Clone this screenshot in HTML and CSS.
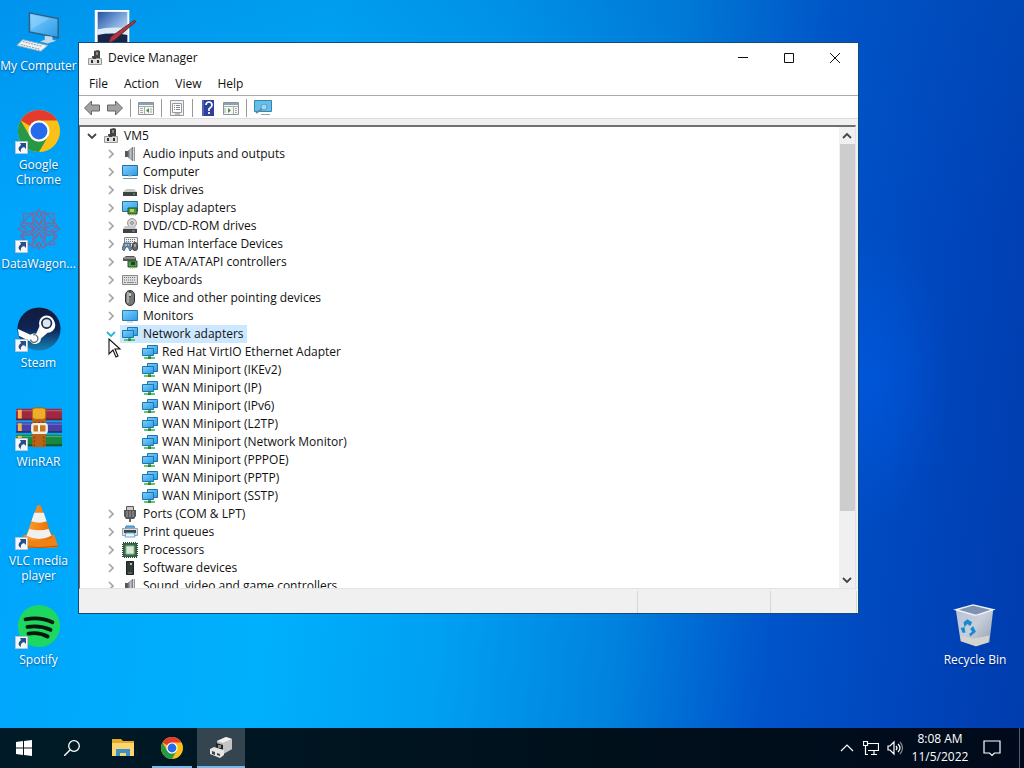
FILE: index.html
```html
<!DOCTYPE html>
<html lang="en">
<head>
<meta charset="utf-8">
<title>Device Manager</title>
<link rel="stylesheet" href="styles.css">
</head>
<body>
<svg class="defs" aria-hidden="true">
  <defs>
    <linearGradient id="screen" x1="0" y1="0" x2="1" y2="1"><stop offset="0" stop-color="#7fd0ff"/><stop offset="1" stop-color="#2c9be6"/></linearGradient>
    <linearGradient id="steel" x1="0" y1="0" x2="1" y2="0"><stop offset="0" stop-color="#666"/><stop offset=".5" stop-color="#c4c4c4"/><stop offset="1" stop-color="#777"/></linearGradient>
    <linearGradient id="steam" x1="0" y1="0" x2="0" y2="1"><stop offset="0" stop-color="#121a3a"/><stop offset=".5" stop-color="#0f2556"/><stop offset="1" stop-color="#1583b8"/></linearGradient>
    <linearGradient id="cone" x1="0" y1="0" x2="1" y2="0"><stop offset="0" stop-color="#ffa130"/><stop offset="1" stop-color="#e86a00"/></linearGradient>
    <linearGradient id="bin" x1="0" y1="0" x2="1" y2="1"><stop offset="0" stop-color="#b3c3d8"/><stop offset=".5" stop-color="#c8ced9"/><stop offset="1" stop-color="#8f9db4"/></linearGradient>
    <linearGradient id="sky" x1="0" y1="0" x2="1" y2="1"><stop offset="0" stop-color="#2550a0"/><stop offset=".5" stop-color="#7ba6dc"/><stop offset="1" stop-color="#e6eef6"/></linearGradient>
  </defs>
  <symbol id="right" viewBox="0 0 12 12"><path d="M4 2l4 4-4 4" fill="none" stroke="#a4a4a4" stroke-width="1.7"/></symbol>
  <symbol id="down" viewBox="0 0 12 12"><path d="M2 4l4 4 4-4" fill="none" stroke="currentColor" stroke-width="1.8"/></symbol>
  <symbol id="device" viewBox="0 0 16 16"><path d="M7 1l4-1 2 1v8H7z" fill="#444"/><path d="M9 2h2v3H9z" fill="#8a8a8a"/><path d="M5 6h4v4H5z" fill="#555"/><path d="M1.500 8.500h13v6h-13z" fill="#dededa" stroke="#999"/><path d="M4 10h2v3H4zM10 10h2v3h-2z" fill="#333"/><path d="M6 6h3v3H6z" fill="#444"/></symbol>
  <symbol id="audio" viewBox="0 0 16 16"><path d="M3 5h3v6H3z" fill="#555"/><path d="M6 5l5-4v14l-5-4z" fill="url(#steel)" stroke="#777" stroke-width=".6"/><path d="M12.500 1v14" stroke="#999"/></symbol>
  <symbol id="computer" viewBox="0 0 16 16"><path d="M.5 1.500h15v10H.5z" fill="url(#screen)" stroke="#23739f"/><path d="M1 14.500h14" stroke="#6c9fbd"/><path d="M6 12h4" stroke="#bbb"/></symbol>
  <symbol id="monitor" viewBox="0 0 16 16"><path d="M.5 2.500h15v10H.5z" fill="url(#screen)" stroke="#267cb0"/><path d="M5 14h6" stroke="#bbb"/></symbol>
  <symbol id="disk" viewBox="0 0 16 16"><path d="M4 7h8l3 3H1z" fill="#c6c9c8"/><path d="M1 10h14v4H1z" fill="#3c4444"/><path d="M11 12h2" stroke="#38d270"/></symbol>
  <symbol id="display" viewBox="0 0 16 16"><path d="M.5 1.500h15v10H.5z" fill="url(#screen)" stroke="#23739f"/><path d="M6 8h9v6H6z" fill="#439849" stroke="#24532b"/><path d="M8 9h4v3H8z" fill="#bacb47"/><path d="M7 15h7" stroke="#d8a931" stroke-dasharray="1 1"/></symbol>
  <symbol id="dvd" viewBox="0 0 16 16"><circle cx="10" cy="5" r="4.500" fill="#d5d5d5" stroke="#999"/><circle cx="10" cy="5" r="1.300" fill="#fff" stroke="#777"/><path d="M3 8h9l3 3H1z" fill="#c6c9c8"/><path d="M1 11h14v4H1z" fill="#3c4444"/><path d="M10 13h3" stroke="#999"/></symbol>
  <symbol id="hid" viewBox="0 0 16 16"><path d="M2.500 1.500h13v6h-13z" fill="#eee" stroke="#888"/><path d="M4 3.500h10M4 5.500h10" stroke="#777" stroke-dasharray="1 1"/><path d="M0 13l2-6h6l2 6-2 2-2-4H4l-2 4z" fill="#6289ab" stroke="#344b5b" stroke-width=".7"/><path d="M3 9h2M6 9h1" stroke="#dcecf8"/><rect x="10.500" y="6.500" width="5" height="8" rx="2.500" fill="#666" stroke="#444"/><path d="M13 8v3" stroke="#ddd"/></symbol>
  <symbol id="ide" viewBox="0 0 16 16"><path d="M1 4l3-2h8l2 2v3H1z" fill="#555"/><path d="M2 4h11" stroke="#c7c7c7"/><path d="M6 7h9v6H6z" fill="#48a04e" stroke="#285a2c"/><path d="M9 8h4v3H9z" fill="#243e29"/><path d="M8 14h6" stroke="#c9a639" stroke-dasharray="1 1"/></symbol>
  <symbol id="keyboard" viewBox="0 0 16 16"><path d="M.5 3.500h15v9H.5z" fill="#ddd" stroke="#888"/><path d="M2 5.500h12M2 8h12" stroke="#777" stroke-dasharray="1 1"/><path d="M2 10.500h2M5 10.500h7M13 10.500h1" stroke="#888"/></symbol>
  <symbol id="mouse" viewBox="0 0 16 16"><rect x="3.500" y=".5" width="9" height="15" rx="4.500" fill="#777" stroke="#333"/><rect x="5" y="2" width="2" height="11" rx="1" fill="#aaa"/><path d="M8 1v6" stroke="#222"/><path d="M8 3v3" stroke="#eee" stroke-width="1.500"/></symbol>
  <symbol id="network" viewBox="0 0 16 16"><path d="M5.500 1.500h10v8h-10z" fill="url(#screen)" stroke="#1d77a9"/><path d="M.5 4.500h11v7H.5z" fill="url(#screen)" stroke="#1d77a9"/><path d="M6 12h3v2H6z" fill="#54a963"/><path d="M2 14h11" stroke="#5cc873" stroke-width="2"/><path d="M6 14h3" stroke="#2c8143" stroke-width="2"/></symbol>
  <symbol id="port" viewBox="0 0 16 16"><path d="M4.500.5h7v4h-7z" fill="#ccc" stroke="#555"/><path d="M2 4h12v6l-2 3H4l-2-3z" fill="#555"/><path d="M5 5v6M8 5v6M11 5v6" stroke="#aaa"/><path d="M7 13h2v3H7z" fill="#666"/></symbol>
  <symbol id="printer" viewBox="0 0 16 16"><path d="M4 2h8l1 4H3z" fill="#52adea" stroke="#55839e"/><path d="M.5 4.500h15v7H.5z" fill="#dce1e3" stroke="#9aa5ab"/><path d="M2 6h12v3H2z" fill="#38474f"/><path d="M4 9h8l1 4H3z" fill="#e8f7ff" stroke="#6aa8cb"/></symbol>
  <symbol id="processor" viewBox="0 0 16 16"><path d="M1 1h14v14H1z" fill="#356842" stroke="#234b30" stroke-width="2" stroke-dasharray="1 1"/><path d="M1.500 1.500h13v13h-13z" fill="#3a6b46"/><path d="M4 4h8v8H4z" fill="#d7e9d9" stroke="#8fb697"/></symbol>
  <symbol id="software" viewBox="0 0 16 16"><path d="M4.500 1.500h7v13h-7z" fill="#303c38" stroke="#17201d"/><path d="M8 3h2v2H8z" fill="#a7c7b3"/><path d="M6 13h4" stroke="#78827b"/></symbol>
  <symbol id="chrome" viewBox="0 0 48 48"><circle cx="24" cy="24" r="22" fill="#fbc116"/><path d="M4.950 13A22 22 0 0 1 43.050 13H24A11 11 0 0 0 14.470 18.500z" fill="#e33b2e"/><path d="M4.950 13A22 22 0 0 0 24 46L33.530 29.500A11 11 0 0 1 14.470 29.500z" fill="#269947"/><circle cx="24" cy="24" r="11" fill="#fff"/><circle cx="24" cy="24" r="8.800" fill="#276bed"/></symbol>
  <symbol id="shortcut" viewBox="0 0 13 13"><path d="M.5.5h12v12H.5z" fill="#f5f7fa" stroke="#b8c4d4"/><path d="M5 2h6v6L9 6Q5 7 6 11Q1 8 6 4z" fill="#25508c"/></symbol>
</svg>

<main class="desktop">
  <a class="shortcut" href="#"><svg class="art" viewBox="0 0 48 48"><path d="M14 4l30 6v20l-30-6z" fill="url(#screen)" stroke="#315e82" stroke-width="1.500"/><path d="M15 6l20 4-19 11z" fill="#a5ddff" opacity=".4"/><path d="M30 28l8 1v3l4 1-9 3-8-2 5-2z" fill="#c5d8e4"/><path d="M7 32l26 6-7 6-25-6z" fill="#eef3f6" stroke="#9cb0be"/><path d="M7 34l20 5M5 37l20 5" stroke="#8797a2" stroke-dasharray="2 1"/></svg><span class="single">My Computer</span></a>
  <a class="shortcut" href="#"><svg class="art" viewBox="0 0 48 48"><use href="#chrome"/></svg><svg class="badge"><use href="#shortcut"/></svg><span>Google Chrome</span></a>
  <a class="shortcut" href="#"><svg class="art" viewBox="0 0 48 48"><g fill="none" stroke="#8b6294" stroke-width="1.200"><path d="M24 2l4 9-4 8-4-8zM24 27l4 8-4 9-4-9zM2 23l9-4 8 4-8 4zM29 23l9-4 8 4-8 4z"/><path d="M8 7h10v10H8zM30 7h10v10H30zM8 29h10v10H8zM30 29h10v10H30z"/><path d="M12 11l8-6 4 6 5-6 7 6 7 9-6 4 6 7-8 6-7 6-4-6-5 6-8-7-6-6 6-6-6-6z"/><path d="M17 12l7 7 7-7M17 34l7-7 7 7M13 16l7 7-7 7M35 16l-7 7 7 7M17 17l14 12M31 17L17 29"/></g></svg><svg class="badge"><use href="#shortcut"/></svg><span>DataWagon...</span></a>
  <a class="shortcut" href="#"><svg class="art" viewBox="0 0 48 48"><circle cx="24" cy="24" r="22.500" fill="url(#steam)"/><path d="M2 24l13 6q3-2 6-1l4-9a8 8 0 1 1 8 8l-7 6a6 6 0 0 1-11 3L3 31z" fill="#fff"/><circle cx="32" cy="18" r="8" fill="#fff"/><circle cx="32" cy="18" r="5" fill="#dfe8ef" stroke="#172c50" stroke-width="1.800"/><path d="M15 35a4 4 0 1 0 3-5" fill="none" stroke="#678" stroke-width="1.500"/></svg><svg class="badge"><use href="#shortcut"/></svg><span>Steam</span></a>
  <a class="shortcut" href="#"><svg class="art" viewBox="0 0 48 48"><rect x="0" y="4" width="48" height="12" rx="1" fill="#a02642"/><rect x="0" y="18" width="48" height="11" rx="1" fill="#4543ab"/><rect x="0" y="31" width="48" height="12" rx="1" fill="#17883d"/><path d="M0 15h48M0 28h48M0 42h48" stroke="#222" opacity=".5" stroke-width="2"/><path d="M0 6h48M0 20h48M0 33h48" stroke="#fff" opacity=".3"/><path d="M4 5v9M4 19v8M4 32v8" stroke="#f3b64c" stroke-width="4"/><path d="M17 3h14v41H17z" fill="#b96218"/><rect x="17" y="3" width="14" height="12" rx="3" fill="#efad2b" stroke="#a16516"/><path d="M19 33v10M29 33v10M19 18h10" stroke="#6e380c" stroke-dasharray="2 2"/><rect x="17" y="20" width="15" height="9" rx="2" fill="#c9771f" stroke="#f0eee8" stroke-width="2.500"/><path d="M24 20v8" stroke="#fff" stroke-width="2"/></svg><svg class="badge"><use href="#shortcut"/></svg><span>WinRAR</span></a>
  <a class="shortcut" href="#"><svg class="art" viewBox="0 0 48 48"><path d="M8 32h32l4 13q-20 2-40 0z" fill="#f08117"/><path d="M4 44q20 3 40 0" fill="none" stroke="#b85409"/><path d="M22 2q2-2 4 0l12 33q-13 8-28 0z" fill="url(#cone)"/><path d="M19 9h10l3 9q-8 3-16 0zM14 26q10 3 20 0l3 7q-13 7-26 0z" fill="#eff0ef"/></svg><svg class="badge"><use href="#shortcut"/></svg><span>VLC media player</span></a>
  <a class="shortcut" href="#"><svg class="art" viewBox="0 0 48 48"><circle cx="24" cy="24" r="22" fill="#1ed760"/><path d="M10 17q15-3 28 3M12 25q13-2 24 3M13 32q11-2 20 3" fill="none" stroke="#06170b" stroke-width="4" stroke-linecap="round"/></svg><svg class="badge"><use href="#shortcut"/></svg><span>Spotify</span></a>
  <a class="shortcut paint" href="#" aria-label="Picture"><svg class="art" viewBox="0 0 48 48"><path d="M5 1h36v45H5z" fill="#fff"/><path d="M8 3h31v28H8z" fill="url(#sky)"/><path d="M8 21q14-3 31-1v8H8z" fill="#dce9f6"/><path d="M8 27q15-3 31 0v9H8z" fill="#182449"/><path d="M48 13L26 32l-7 4 3-7L46 12z" fill="#b0383c" stroke="#672731"/></svg></a>
  <a class="shortcut bin" href="#"><svg class="art" viewBox="0 0 48 48"><path d="M4 7l18-5 21 5-4 34-14 4-16-5z" fill="url(#bin)"/><path d="M4 7l18-5 21 5-18 6z" fill="#7f92b1" stroke="#edf2f7" stroke-width="1.500"/><path d="M25 13l14 3M25 13v32" stroke="#c9d1dc" opacity=".6"/><path d="M9 35l14 2 16-3-1 7-13 4-15-5z" fill="#d5d3cd"/><path d="M12 20l4-3 5 3-2 4-3-2-3 3zM9 26l4-1 1 6h-3zM22 24l3 6-6 5-1-3 3-2-2-3z" fill="#178bd0"/></svg><span>Recycle Bin</span></a>

  <section class="window" aria-label="Device Manager">
    <header class="titlebar"><svg class="icon"><use href="#device"/></svg><h1>Device Manager</h1>
      <button aria-label="Minimize"><svg viewBox="0 0 10 10"><path d="M0 4.500h10"/></svg></button>
      <button aria-label="Maximize"><svg viewBox="0 0 10 10"><path d="M.5.5h9v9h-9z"/></svg></button>
      <button aria-label="Close"><svg viewBox="0 0 10 10"><path d="M0 0l10 10M10 0L0 10"/></svg></button>
    </header>
    <nav class="menu"><button>File</button><button>Action</button><button>View</button><button>Help</button></nav>
    <div class="toolbar">
      <button aria-label="Back"><svg viewBox="0 0 16 16"><path d="M.5 8l7-7v4h8v6h-8v4z" fill="#a2a2a2" stroke="#666"/></svg></button>
      <button aria-label="Forward"><svg viewBox="0 0 16 16"><path d="M15.500 8l-7-7v4h-8v6h8v4z" fill="#a2a2a2" stroke="#666"/></svg></button>
      <hr>
      <button aria-label="Show console tree"><svg viewBox="0 0 16 16"><path d="M.5 2.500h15v12H.5z" fill="#f7f7f3" stroke="#8b9498"/><path d="M1 4h14" stroke="#8ba2b3" stroke-width="2"/><path d="M1 6.500h14M6.500 6v8M2 8.500h3M2 10.500h3M2 12.500h3M13 8v5" stroke="#a4adb0"/><path d="M11 8v5l-3-2.500z" fill="#479244"/></svg></button>
      <hr>
      <button aria-label="Properties"><svg viewBox="0 0 16 16"><path d="M1.500.5h13v15h-13z" fill="#f2f2f2" stroke="#999"/><path d="M3.500 3.500h9v9h-9z" fill="#fff" stroke="#999"/><path d="M5 5.500h1M7 5.500h4M5 7.500h1M7 7.500h4M5 9.500h1M7 9.500h4M6 14h5" stroke="#789"/></svg></button>
      <hr>
      <button aria-label="Help"><svg viewBox="0 0 16 16"><path d="M2 0h12v16H2z" fill="#2e3f9c"/><path d="M3 0v16" stroke="#7482d0"/><path d="M6 5q0-3 3-3t3 3q0 2-3 4v2M9 12v2" fill="none" stroke="#fff" stroke-width="1.700"/></svg></button>
      <button aria-label="Action pane"><svg viewBox="0 0 16 16"><path d="M.5 2.500h15v12H.5z" fill="#f7f7f3" stroke="#8b9498"/><path d="M1 4h14" stroke="#8ba2b3" stroke-width="2"/><path d="M1 6.500h14M10.500 6v8M12 8.500h2M12 10.500h2M12 12.500h2M2 8v5" stroke="#a4adb0"/><path d="M5 8v5l3-2.500z" fill="#479244"/></svg></button>
      <hr>
      <button aria-label="Scan for hardware changes"><svg class="wide" viewBox="0 0 18 16"><path d="M.5.5h17v11H.5z" fill="#65bde9" stroke="#3787ad"/><circle cx="10" cy="7" r="3" fill="#9bd8f5" stroke="#5d9dbb"/><path d="M8 9l-6 4" stroke="#628ea5" stroke-width="2"/><path d="M7 14.500h9" stroke="#7fa6b9"/></svg></button>
    </div>
    <div class="content">
      <ul class="tree">
        <li><div class="row"><button class="twist" aria-label="Collapse VM5"><svg><use href="#down"/></svg></button><svg class="icon"><use href="#device"/></svg><span>VM5</span></div>
          <ul>
            <li class="row"><button class="twist" aria-label="Expand"><svg><use href="#right"/></svg></button><svg class="icon"><use href="#audio"/></svg><span>Audio inputs and outputs</span></li>
            <li class="row"><button class="twist" aria-label="Expand"><svg><use href="#right"/></svg></button><svg class="icon"><use href="#computer"/></svg><span>Computer</span></li>
            <li class="row"><button class="twist" aria-label="Expand"><svg><use href="#right"/></svg></button><svg class="icon"><use href="#disk"/></svg><span>Disk drives</span></li>
            <li class="row"><button class="twist" aria-label="Expand"><svg><use href="#right"/></svg></button><svg class="icon"><use href="#display"/></svg><span>Display adapters</span></li>
            <li class="row"><button class="twist" aria-label="Expand"><svg><use href="#right"/></svg></button><svg class="icon"><use href="#dvd"/></svg><span>DVD/CD-ROM drives</span></li>
            <li class="row"><button class="twist" aria-label="Expand"><svg><use href="#right"/></svg></button><svg class="icon"><use href="#hid"/></svg><span>Human Interface Devices</span></li>
            <li class="row"><button class="twist" aria-label="Expand"><svg><use href="#right"/></svg></button><svg class="icon"><use href="#ide"/></svg><span>IDE ATA/ATAPI controllers</span></li>
            <li class="row"><button class="twist" aria-label="Expand"><svg><use href="#right"/></svg></button><svg class="icon"><use href="#keyboard"/></svg><span>Keyboards</span></li>
            <li class="row"><button class="twist" aria-label="Expand"><svg><use href="#right"/></svg></button><svg class="icon"><use href="#mouse"/></svg><span>Mice and other pointing devices</span></li>
            <li class="row"><button class="twist" aria-label="Expand"><svg><use href="#right"/></svg></button><svg class="icon"><use href="#monitor"/></svg><span>Monitors</span></li>
            <li><div class="row selected"><button class="twist" aria-label="Collapse"><svg><use href="#down"/></svg></button><span class="highlight"><svg class="icon"><use href="#network"/></svg><span>Network adapters</span></span></div>
              <ul class="leaves">
                <li class="row"><svg class="icon"><use href="#network"/></svg><span>Red Hat VirtIO Ethernet Adapter</span></li>
                <li class="row"><svg class="icon"><use href="#network"/></svg><span>WAN Miniport (IKEv2)</span></li>
                <li class="row"><svg class="icon"><use href="#network"/></svg><span>WAN Miniport (IP)</span></li>
                <li class="row"><svg class="icon"><use href="#network"/></svg><span>WAN Miniport (IPv6)</span></li>
                <li class="row"><svg class="icon"><use href="#network"/></svg><span>WAN Miniport (L2TP)</span></li>
                <li class="row"><svg class="icon"><use href="#network"/></svg><span>WAN Miniport (Network Monitor)</span></li>
                <li class="row"><svg class="icon"><use href="#network"/></svg><span>WAN Miniport (PPPOE)</span></li>
                <li class="row"><svg class="icon"><use href="#network"/></svg><span>WAN Miniport (PPTP)</span></li>
                <li class="row"><svg class="icon"><use href="#network"/></svg><span>WAN Miniport (SSTP)</span></li>
              </ul></li>
            <li class="row"><button class="twist" aria-label="Expand"><svg><use href="#right"/></svg></button><svg class="icon"><use href="#port"/></svg><span>Ports (COM &amp; LPT)</span></li>
            <li class="row"><button class="twist" aria-label="Expand"><svg><use href="#right"/></svg></button><svg class="icon"><use href="#printer"/></svg><span>Print queues</span></li>
            <li class="row"><button class="twist" aria-label="Expand"><svg><use href="#right"/></svg></button><svg class="icon"><use href="#processor"/></svg><span>Processors</span></li>
            <li class="row"><button class="twist" aria-label="Expand"><svg><use href="#right"/></svg></button><svg class="icon"><use href="#software"/></svg><span>Software devices</span></li>
            <li class="row"><button class="twist" aria-label="Expand"><svg><use href="#right"/></svg></button><svg class="icon"><use href="#audio"/></svg><span>Sound, video and game controllers</span></li>
          </ul></li>
      </ul>
      <div class="scrollbar"><button class="up" aria-label="Scroll up"><svg><use href="#down"/></svg></button><div class="track"><div class="thumb"></div></div><button aria-label="Scroll down"><svg><use href="#down"/></svg></button></div>
    </div>
    <footer class="status"><span></span><span></span><span></span></footer>
  </section>
  <svg class="cursor" viewBox="0 0 14 22"><path d="M1 1v15l4-4 3 7 2-1-3-7h5z" fill="#fff" stroke="#111" stroke-width="1.100"/></svg>
</main>

<footer class="taskbar">
  <button aria-label="Start"><svg class="i16" viewBox="0 0 16 16"><path d="M0 2l7-1v6.500H0zM8 1l8-1v7.500H8zM0 8.500h7V15l-7-1zM8 8.500h8V16l-8-1z" fill="#fff"/></svg></button>
  <button aria-label="Search"><svg class="i16" viewBox="0 0 16 16"><circle cx="10" cy="6" r="5.300" fill="none" stroke="#fff" stroke-width="1.300"/><path d="M6 10l-6 6" stroke="#fff" stroke-width="1.400"/></svg></button>
  <div class="apps">
    <button aria-label="File Explorer"><svg class="i22" viewBox="0 0 22 22"><path d="M0 2h9l2 2h11v15H0z" fill="#e5a92a"/><path d="M0 6h22v13H0z" fill="#fcd66d"/><path d="M4 12h14v7h-4v-3H8v3H4z" fill="#3b91cb"/></svg></button>
    <button class="running" aria-label="Google Chrome"><svg class="i24"><use href="#chrome"/></svg></button>
    <button class="running active" aria-label="Device Manager"><svg class="i24" viewBox="0 0 24 24"><path d="M8 5l9-4 6 2v10l-9 5-6-3z" fill="#b9b9b9"/><path d="M8 5l9-4 6 2-9 4z" fill="#efefef"/><path d="M14 7l9-4v10l-9 5z" fill="#c4c4c4"/><path d="M7 7l7 2v7l-7-2z" fill="#222"/><path d="M9 9h3v3H9z" fill="#888"/><path d="M1 13l4-2 10 3v5l-4 3-10-4z" fill="#e4e4e4"/><path d="M3 15l3 1v3l-3-1zM8 17l3 1v2l-3-1z" fill="#444"/></svg></button>
  </div>
  <div class="tray">
    <button aria-label="Show hidden icons"><svg class="i16" viewBox="0 0 16 16"><path d="M2 11l6-6 6 6"/></svg></button>
    <button aria-label="Network"><svg class="i16" viewBox="0 0 16 16"><path d="M5 3.500h10.500v7H5M8 14.500h6M11 11v3M.5 1.500h4v4h-4zM2.500 6v8.500H5"/></svg></button>
    <button aria-label="Volume"><svg class="i16" viewBox="0 0 16 16"><path d="M1 6h2l4-4v12l-4-4H1zM9 6q2 2 0 4M11 4q4 4 0 8"/><path d="M13 2q5 6 0 12" opacity=".5"/></svg></button>
    <button class="clock"><span>8:08 AM</span><span>11/5/2022</span></button>
    <button class="notice" aria-label="Notifications"><svg class="i18" viewBox="0 0 18 18"><path d="M1 2h16v12h-5.500L9 16.500 6.500 14H1z"/></svg></button>
    <button class="peek" aria-label="Show desktop"></button>
  </div>
</footer>
</body>
</html>
```
FILE: styles.css
```css
* { box-sizing: border-box; }
body { margin: 0; height: 100vh; display: grid; grid-template-rows: 1fr 40px; overflow: hidden; font: 12px/18px "Open Sans", "Noto Sans", sans-serif; color: #111; }
button { border: 0; padding: 0; background: none; font: inherit; color: inherit; }
svg { display: block; flex: none; }
ul { list-style: none; margin: 0; padding: 0; }
.defs { position: absolute; width: 0; height: 0; }
.desktop {
  position: relative; min-height: 0; padding-top: 8px;
  display: grid; grid-template-columns: 77px 72px 1fr 98px; grid-auto-rows: 99px;
  background:
    radial-gradient(ellipse 80px 150px at 85% 52%, #0060f077, transparent),
    linear-gradient(180deg, #0058b838, transparent 30%),
    linear-gradient(96deg, #00a4fc 0%, #00b0fc 30%, #00a0f2 46%, #0082de 62%, #0054ca 76%, #0046bc 88%, #003cae 100%);
}
.shortcut { grid-column: 1; position: relative; display: flex; flex-direction: column; align-items: center; gap: 2px; color: #fff; text-align: center; line-height: 15px; text-decoration: none; text-shadow: 0 1px 2px #0038; }
.single { white-space: nowrap; }
.art { width: 46px; height: 48px; }
.badge { position: absolute; left: 15px; top: 34px; width: 13px; height: 13px; }
.paint { grid-column: 2; grid-row: 1; }
.bin { grid-column: 4; grid-row: 7; }
.window { position: absolute; inset: 42px 165px 114px 78px; display: flex; flex-direction: column; background: #fff; border: 1px solid #124a78; }
.icon { width: 16px; height: 16px; }
.titlebar { display: flex; align-items: center; height: 30px; padding-left: 8px; }
.titlebar h1 { flex: 1; margin: 0; padding-left: 5px; font-size: 12px; font-weight: 400; }
.titlebar button { width: 46px; height: 30px; display: grid; place-items: center; }
.titlebar button svg { width: 10px; height: 10px; fill: none; stroke: #111; }
.menu { display: flex; gap: 16px; height: 23px; padding: 2px 10px; border-bottom: 1px solid #aaa; }
.toolbar { display: flex; align-items: center; gap: 7px; height: 23px; padding: 2px 0 0 5px; border-bottom: 1px solid #ddd; }
.toolbar svg { width: 16px; height: 16px; }
.toolbar svg.wide { width: 18px; }
.toolbar hr { width: 1px; height: 18px; margin: 0; border: 0; background: #999; }
.content { flex: 1; min-height: 0; display: flex; margin: 6px 2px 0 0; outline: 6px solid #f0f0f0; border: 1px solid #707070; border-top-width: 2px; border-right-color: #e3e3e3; border-bottom-color: #e3e3e3; background: #fff; clip-path: inset(-6px -2px 0 0); }
.tree { flex: 1; min-height: 0; overflow: hidden; padding-left: 6px; }
.tree ul { padding-left: 19px; }
.row { display: flex; align-items: center; height: 18px; white-space: nowrap; }
.row .icon { margin: 0 5px; }
.twist, .twist svg { width: 12px; height: 12px; }
.twist { color: #444; }
.tree .leaves { padding-left: 31px; }
.leaves .icon { margin-left: 6px; }
.leaves .row { gap: 0; }
.leaves .row span { margin-left: -1px; }
.selected .twist { color: #27b4de; }
.highlight { display: flex; align-items: center; height: 18px; margin-left: 3px; padding-right: 3px; background: #cce8ff; }
.highlight .icon { margin: 0 5px 0 2px; }
.scrollbar { width: 16px; display: flex; flex-direction: column; background: #f0f0f0; color: #444; }
.scrollbar button { height: 17px; padding-left: 2px; }
.scrollbar svg { width: 12px; height: 12px; }
.up svg { transform: rotate(180deg); }
.track { flex: 1; min-height: 0; }
.thumb { height: 86%; background: #cdcdcd; margin-left: 1px; }
.status { display: grid; grid-template-columns: 1fr 133px 86px; height: 24px; margin-right: 1px; padding-top: 2px; background: #f0f0f0; }
.status span { border-right: 1px solid #d7d7d7; }
.cursor { position: absolute; left: 108px; top: 338px; width: 14px; height: 22px; }
.taskbar { display: flex; background: linear-gradient(90deg, #001b27, #00101b 60%, #000a1c); color: #fff; }
.taskbar > button, .apps button { width: 48px; display: grid; place-items: center; }
.apps { display: flex; gap: 1px; margin-left: 3px; }
.i16 { width: 16px; height: 16px; }
.i18 { width: 18px; height: 18px; }
.i22 { width: 22px; height: 22px; }
.i24 { width: 24px; height: 24px; }
.running { background: linear-gradient(#76b9ed, #76b9ed) bottom / 40px 2px no-repeat; }
.active { background: linear-gradient(#76b9ed, #76b9ed) bottom / 48px 2px no-repeat, #34454f; }
.tray { margin-left: auto; display: flex; }
.tray svg { fill: none; stroke: #fff; stroke-width: 1.2; }
.tray button { width: 24px; display: grid; place-items: center; }
.tray .clock { width: 66px; place-content: center; }
.tray .notice { width: 38px; }
.tray .peek { width: 5px; margin-left: 8px; border-left: 1px solid #526070; }
```
